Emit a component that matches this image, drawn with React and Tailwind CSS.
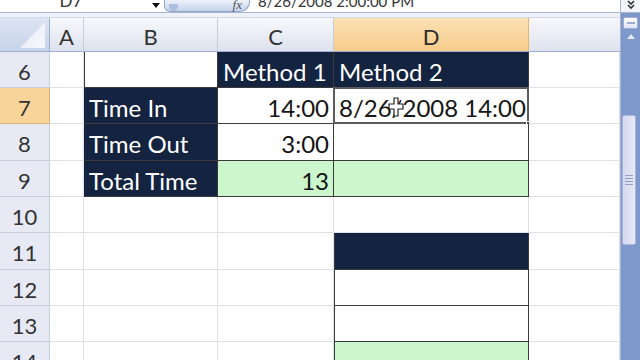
const FONT = { fontFamily: 'Lato, "Open Sans", sans-serif' };

const COLS = ['A', 'B', 'C', 'D', 'E'];
const WIDTHS = ['w-[34px]', 'w-[134px]', 'w-[116px]', 'w-[195px]', 'w-[91px]'];

const GRID = 'border-r border-b border-[#dde0e6]';
const DARK_BOX = 'bg-[#132340] text-white border-r border-b border-[#3a3a3a]';
const WHITE_BOX = 'bg-white border-r border-b border-[#3a3a3a]';
const GREEN_BOX = 'bg-[#ccf6cc] border-r border-b border-[#3a3a3a]';

// what sits in each row, by column
const rows = [
  { n: 6, h: 'h-[36px]', cells: { B: { cls: WHITE_BOX + ' shadow-[inset_1px_0_0_#3a3a3a]' }, C: { cls: DARK_BOX, text: 'Method 1', align: 'left' }, D: { cls: DARK_BOX, text: 'Method 2', align: 'left' } } },
  { n: 7, h: 'h-[36px]', active: true, cells: { B: { cls: DARK_BOX, text: 'Time In', align: 'left' }, C: { cls: WHITE_BOX, text: '14:00', align: 'right' }, D: { cls: WHITE_BOX, text: '8/26/2008 14:00', align: 'left', selected: true } } },
  { n: 8, h: 'h-[37px]', cells: { B: { cls: DARK_BOX, text: 'Time Out', align: 'left' }, C: { cls: WHITE_BOX, text: '3:00', align: 'right' }, D: { cls: WHITE_BOX } } },
  { n: 9, h: 'h-[36px]', cells: { B: { cls: DARK_BOX, text: 'Total Time', align: 'left' }, C: { cls: GREEN_BOX, text: '13', align: 'right' }, D: { cls: GREEN_BOX } } },
  { n: 10, h: 'h-[36px]', cells: {} },
  { n: 11, h: 'h-[37px]', cells: { D: { cls: DARK_BOX + ' shadow-[inset_1px_0_0_#3a3a3a]' } } },
  { n: 12, h: 'h-[36px]', cells: { D: { cls: WHITE_BOX + ' shadow-[inset_1px_0_0_#3a3a3a]' } } },
  { n: 13, h: 'h-[36px]', cells: { D: { cls: WHITE_BOX + ' shadow-[inset_1px_0_0_#3a3a3a]' } } },
  { n: 14, h: 'h-[36px]', cells: { D: { cls: GREEN_BOX + ' shadow-[inset_1px_0_0_#3a3a3a]' } } },
];

function MoveCursor() {
  return (
    <svg width="16" height="20" viewBox="0 0 16 20" className="absolute left-[54px] top-[9px]">
      <path d="M6 1h4v6h5v5h-5v7H6v-7H1V7h5z" fill="#fff" stroke="#222" strokeWidth="1.2" />
    </svg>
  );
}

function FormulaBar() {
  return (
    <div className="h-[13px] flex bg-white border-b border-[#a9b6cf] overflow-hidden text-[#333]">
      <div className="w-[148px] flex items-end justify-center overflow-hidden">
        <span className="text-[17px] leading-[22px] ml-[-6px]">D7</span>
      </div>
      <div className="w-[16px] flex items-start justify-center pt-[3px]">
        <svg width="8" height="5" viewBox="0 0 8 5"><path d="M0 0h8L4 5z" fill="#111" /></svg>
      </div>
      <div className="w-[86px] h-[12px] rounded-br-[10px] rounded-bl-[6px] border border-t-0 border-[#8fa5cc] bg-gradient-to-b from-[#eef2fa] to-[#c4d2ec] flex items-end justify-between px-[4px]">
        <div className="w-[9px] h-[7px] rounded-b-full bg-[#aebfdd]" />
        <span className="text-[13px] leading-[13px] italic text-[#555] mr-[3px]" style={{ fontFamily: '"Liberation Serif", serif' }}>fx</span>
      </div>
      <div className="flex-1 flex items-end pl-[8px] overflow-hidden">
        <span className="text-[15px] leading-[22px]">8/26/2008 2:00:00 PM</span>
      </div>
      <div className="w-[20px] border-l border-[#a9b6cf] bg-[#f3f5fa] flex items-start justify-center">
        <svg width="10" height="11" viewBox="0 0 10 11"><path d="M2 1l3 3 3-3M2 5l3 3 3-3" stroke="#333" strokeWidth="1.6" fill="none" /></svg>
      </div>
    </div>
  );
}

function ColumnHeader() {
  return (
    <div className="flex h-[34px] border-b border-[#9eb0cf]">
      <div className="w-[50px] border-r border-[#9eb0cf] bg-gradient-to-b from-[#dde5f3] to-[#c7d3e9] relative overflow-hidden">
        <svg width="50" height="34" className="absolute inset-0">
          <defs>
            <linearGradient id="tri" x1="0" y1="0" x2="1" y2="1">
              <stop offset="0" stopColor="#e3e9f5" />
              <stop offset="1" stopColor="#f8f9fc" />
            </linearGradient>
          </defs>
          <path d="M45 4V30H20z" fill="url(#tri)" />
        </svg>
      </div>
      {COLS.map((c, i) => (
        <div
          key={c}
          className={
            WIDTHS[i] + ' flex items-center justify-center pt-[3px] text-[22px] ' +
            (c === 'D'
              ? 'bg-gradient-to-b from-[#fbe1b4] to-[#f7cc8b] text-[#2c2c2c] border-r border-[#e2b570]'
              : c === 'E'
              ? 'bg-gradient-to-b from-[#f7f8fb] to-[#dde2ee] text-[#333]'
              : 'bg-gradient-to-b from-[#f7f8fb] to-[#dde2ee] text-[#333] border-r border-[#c3cbdc]')
          }
        >
          {c !== 'E' ? c : ''}
        </div>
      ))}
    </div>
  );
}

function Row({ row }) {
  return (
    <div className={'flex shrink-0 ' + row.h}>
      <div
        className={
          'w-[50px] flex items-center justify-center pt-[3px] text-[22px] text-[#333] border-r border-b ' +
          (row.active ? 'bg-[#f9d49a] border-[#e0b577]' : 'bg-[#e7eaf5] border-[#c8cfe0]')
        }
      >
        {row.n}
      </div>
      {COLS.map((c, i) => {
        const cell = row.cells[c];
        const cls = cell ? cell.cls : GRID + ' bg-white';
        return (
          <div
            key={c}
            className={
              WIDTHS[i] + ' relative flex items-center pt-[4px] text-[24px] text-[#151515] whitespace-nowrap ' + cls + ' ' +
              (cell && cell.align === 'right' ? 'justify-end pr-[4px]' : 'pl-[5px]')
            }
          >
            {cell && cell.text ? <span className={cell.cls === DARK_BOX ? 'text-white' : ''}>{cell.text}</span> : null}
            {cell && cell.selected ? (
              <>
                <div className="absolute inset-[-1px] border-2 border-[#5b5b5b]" />
                <div className="absolute right-[-4px] bottom-[-4px] w-[6px] h-[6px] bg-[#444] border border-white" />
                <MoveCursor />
              </>
            ) : null}
          </div>
        );
      })}
    </div>
  );
}

function ScrollBar() {
  return (
    <div className="w-[20px] flex flex-col border-l border-[#a5b5d4] bg-[#7f98cb]">
      <div className="h-[12px] mx-[2px] mt-[4px] rounded-[2px] bg-gradient-to-b from-[#ffffff] to-[#dfe5f2] border border-[#9fb0d2] flex items-center justify-center">
        <div className="w-[8px] h-[2px] bg-[#9aaad0]" />
      </div>
      <div className="h-[86px] flex justify-center pt-[5px]">
        <svg width="8" height="5" viewBox="0 0 8 5"><path d="M0 5h8L4 0z" fill="#e6ebf6" /></svg>
      </div>
      <div className="h-[130px] ml-[1px] mr-[4px] rounded-[2px] bg-gradient-to-r from-[#d3d8ee] to-[#e7e9f6] border border-[#a9b6d8] flex flex-col items-center justify-center gap-[2px]">
        <div className="w-[8px] h-[1px] bg-[#8e9cc2]" />
        <div className="w-[8px] h-[1px] bg-[#8e9cc2]" />
        <div className="w-[8px] h-[1px] bg-[#8e9cc2]" />
        <div className="w-[8px] h-[1px] bg-[#8e9cc2]" />
      </div>
      <div className="flex-1" />
    </div>
  );
}

export default function App() {
  return (
    <div className="w-[640px] h-[360px] overflow-hidden bg-white" style={FONT}>
      <FormulaBar />
      <div className="flex h-[347px]">
        <div className="w-[620px] flex flex-col overflow-hidden">
          <div className="h-[5px] shrink-0 bg-[#eef1f8] border-b border-[#d3dae8]" />
          <ColumnHeader />
          {rows.map((r) => (
            <Row key={r.n} row={r} />
          ))}
        </div>
        <ScrollBar />
      </div>
    </div>
  );
}
